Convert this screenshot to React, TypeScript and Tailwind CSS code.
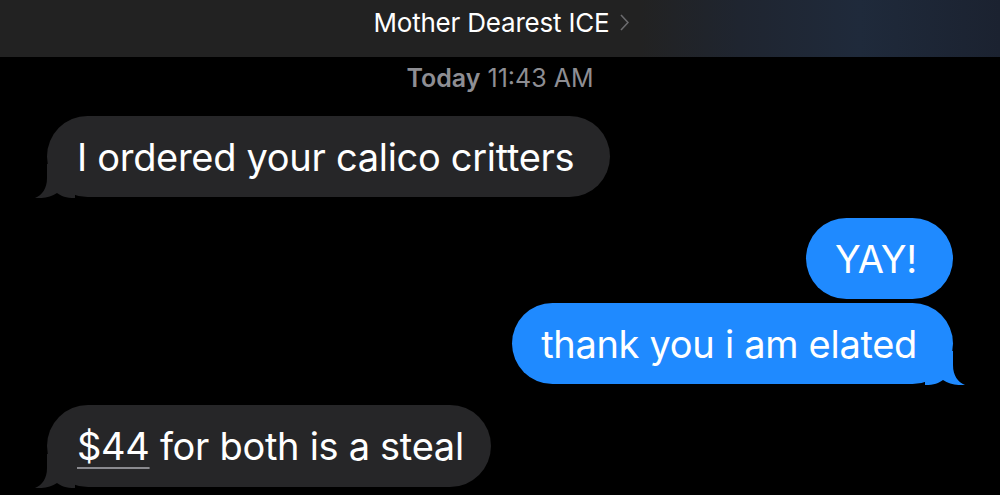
import React from "react";

function LeftTail({ color }: { color: string }) {
  return (
    <svg
      className="absolute left-[-12px] bottom-[-1px]"
      width="40"
      height="34"
      viewBox="0 0 40 34"
    >
      <path
        d="M12 0 L12 14 C12 25 7 31 0 34 C8 34.6 16 33 22 29 C26 32 31 34 40 34 L40 0 Z"
        fill={color}
      />
    </svg>
  );
}

function RightTail({ color }: { color: string }) {
  return (
    <svg
      className="absolute right-[-12px] bottom-[-1px] -scale-x-100"
      width="40"
      height="34"
      viewBox="0 0 40 34"
    >
      <path
        d="M12 0 L12 14 C12 25 7 31 0 34 C8 34.6 16 33 22 29 C26 32 31 34 40 34 L40 0 Z"
        fill={color}
      />
    </svg>
  );
}

export default function App() {
  return (
    <div
      className="w-[1000px] h-[495px] overflow-hidden bg-black text-white"
      style={{ fontFamily: "Inter, 'Noto Sans', sans-serif" }}
    >
      <div className="h-[57px] flex items-center justify-center bg-[linear-gradient(90deg,#222222_0%,#222222_64%,#1f2530_74%,#1f2a3b_86%,#1b2230_100%)]">
        <div className="flex items-center gap-[10px] mb-[13px] ml-[2px]">
          <span className="text-[26px] tracking-[-0.2px] text-white">Mother Dearest ICE</span>
          <svg width="9" height="17" viewBox="0 0 9 17" className="mt-[1px]">
            <polyline points="1,1 8,8.5 1,16" fill="none" stroke="#6b6b6e" strokeWidth="1.6" />
          </svg>
        </div>
      </div>

      <div className="flex justify-center mt-[6px] text-[25px] leading-[30px] text-[#8e8e93]">
        <span className="font-semibold">Today</span>
        <span className="ml-[7px]">11:43 AM</span>
      </div>

      <div className="flex flex-col px-[47px] mt-[23px] text-[38px] leading-[46px] tracking-[-0.3px]">
        <div className="self-start relative">
          <div className="relative rounded-[41px] bg-[#262628] h-[81px] pl-[30px] pr-[36px] flex items-center">
            I ordered your calico critters
          </div>
          <LeftTail color="#262628" />
        </div>

        <div className="self-end mt-[21px]">
          <div className="rounded-[41px] bg-[#1f8aff] h-[81px] pl-[29px] pr-[36px] flex items-center">
            YAY!
          </div>
        </div>

        <div className="self-end relative mt-[4px]">
          <div className="relative rounded-[41px] bg-[#1f8aff] h-[81px] pl-[29px] pr-[36px] flex items-center">
            thank you i am elated
          </div>
          <RightTail color="#1f8aff" />
        </div>

        <div className="self-start relative mt-[21px]">
          <div className="relative rounded-[41px] bg-[#262628] h-[82px] pl-[30px] pr-[27px] flex items-center">
            <span className="underline decoration-[#8a8a8f] decoration-[2px] underline-offset-[7px]">$44</span>
            <span>&nbsp;for both is a steal</span>
          </div>
          <LeftTail color="#262628" />
        </div>
      </div>
    </div>
  );
}
